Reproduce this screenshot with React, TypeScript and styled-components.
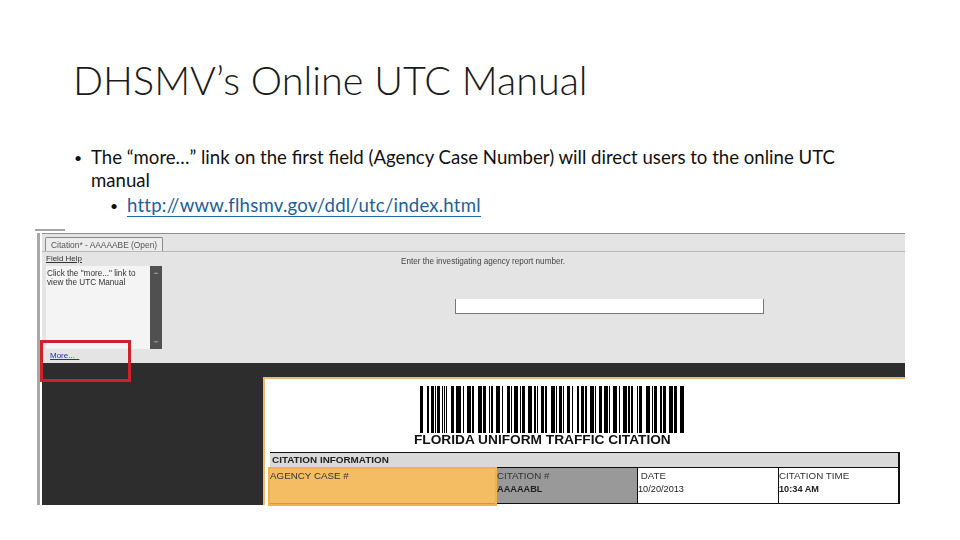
import { createGlobalStyle, styled } from "styled-components";

const GlobalStyle = createGlobalStyle`
  html, body {
    margin: 0;
    padding: 0;
    background: #fff;
  }
`;

// bar, gap, bar, gap ... in pixels, read off the reference
const barcode: number[] = [
  3, 4, 2, 2, 3, 1, 1, 1, 3, 2, 1, 1, 1, 1, 1, 4,
  3, 2, 5, 2, 1, 3, 4, 1, 2, 4,
  4, 1, 3, 3, 1, 1, 2, 3, 4, 2, 1, 4,
  3, 1, 1, 2, 4, 2, 1, 1, 3, 3,
  4, 2, 2, 1, 1, 3, 3, 1, 2, 4,
  4, 1, 1, 2, 3, 1, 1, 3, 3, 2, 1, 4,
  2, 2, 3, 1, 2, 3, 4, 1, 1, 3,
  3, 2, 4, 1, 1, 3, 4, 2, 1, 3,
  4, 1, 2, 1, 2, 4, 1, 1, 3, 4,
  4, 2, 1, 1, 3, 3, 2, 1, 3, 3, 4, 1, 3, 3, 4,
];

const Barcode = () => {
  let x = 0;
  const bars = barcode.map((w, i) => {
    const rect = i % 2 === 0 ? <rect key={i} x={x} y={0} width={w} height={47} fill="#000" /> : null;
    x += w;
    return rect;
  });
  return (
    <BarcodeSvg viewBox={`0 0 ${x} 47`} preserveAspectRatio="none">
      {bars}
    </BarcodeSvg>
  );
};

const App = () => {
  return (
    <Slide>
      <GlobalStyle />
      <Title>DHSMV’s Online UTC Manual</Title>
      <Bullets>
        <Bullet>
          The “more…” link on the first field (Agency Case Number) will direct users to the online UTC manual
        </Bullet>
        <SubBullet>
          <LinkText>http://www.flhsmv.gov/ddl/utc/index.html</LinkText>
        </SubBullet>
      </Bullets>
      <Shot>
        <ShotTick />
        <LeftEdge />
        <ShotBody>
          <TopPanel>
            <TabStrip>
              <Tab>Citation* - AAAAABE (Open)</Tab>
            </TabStrip>
            <PanelMain>
              <Sidebar>
                <HelpTitle>Field Help</HelpTitle>
                <HelpRow>
                  <HelpBox>
                    Click the "more..." link to
                    <br />
                    view the UTC Manual
                  </HelpBox>
                  <ScrollBar>
                    <ArrowUp />
                    <ArrowDown />
                  </ScrollBar>
                </HelpRow>
                <MoreLink>More...&nbsp;&nbsp;</MoreLink>
              </Sidebar>
              <FieldArea>
                <Prompt>Enter the investigating agency report number.</Prompt>
                <InputBox />
              </FieldArea>
            </PanelMain>
          </TopPanel>
          <DarkPanel>
            <Paper>
              <Barcode />
              <FormTitle>FLORIDA UNIFORM TRAFFIC CITATION</FormTitle>
              <Table>
                <TableHead>CITATION INFORMATION</TableHead>
                <TableRow>
                  <Cell $w={227}>
                    <CellLabel>AGENCY CASE #</CellLabel>
                  </Cell>
                  <Cell $w={140} $bg="#999999">
                    <CellLabel>CITATION #</CellLabel>
                    <CellValue>AAAAABL</CellValue>
                  </Cell>
                  <Cell $w={141} $line>
                    <CellLabel>&nbsp;DATE</CellLabel>
                    <CellValue $normal>10/20/2013</CellValue>
                  </Cell>
                  <Cell $w={119} $line>
                    <CellLabel>CITATION TIME</CellLabel>
                    <CellValue>10:34 AM</CellValue>
                  </Cell>
                </TableRow>
                <ActiveField />
              </Table>
            </Paper>
          </DarkPanel>
        </ShotBody>
        <Callout />
      </Shot>
    </Slide>
  );
};

export default App;

const Slide = styled.div`
  position: relative;
  width: 960px;
  height: 540px;
  overflow: hidden;
  background: #fff;
  padding: 54px 0 0 74px;
  box-sizing: border-box;
  font-family: "Lato", "Liberation Sans", sans-serif;
`;

const Title = styled.h1`
  margin: 0 0 0 -1px;
  height: 92px;
  font-size: 39.6px;
  line-height: 52px;
  font-weight: 300;
  color: #1a1a1a;
`;

const Bullets = styled.ul`
  list-style: none;
  margin: 0;
  padding: 0;
  width: 790px;
  font-size: 18.6px;
  line-height: 23px;
  color: #111;
`;

const Bullet = styled.li`
  position: relative;
  padding-left: 17px;

  &::before {
    content: "•";
    position: absolute;
    left: 0;
    top: 0;
    font-size: 14px;
  }
`;

const SubBullet = styled(Bullet)`
  margin: 2px 0 0 36px;
  padding-left: 17px;
`;

const LinkText = styled.span`
  color: #1f5f96;
  border-bottom: 1.5px solid #1f6aa8;
  letter-spacing: 0.2px;
`;

const Shot = styled.div`
  position: relative;
  display: flex;
  width: 870px;
  height: 272px;
  margin: 16px 0 0 -39px;
  filter: blur(0.25px);
  font-family: "Liberation Sans", sans-serif;
`;

const ShotTick = styled.div`
  position: absolute;
  left: 0;
  top: -4px;
  width: 30px;
  height: 2px;
  background: #a5a5a5;
`;

const LeftEdge = styled.div`
  width: 3px;
  margin: 0 2px 0 2px;
  background: #a8a8a8;
`;

const ShotBody = styled.div`
  flex: 1;
  display: flex;
  flex-direction: column;
  border-top: 1px solid #8e9294;
`;

const TopPanel = styled.div`
  height: 129px;
  background: #e4e4e4;
  display: flex;
  flex-direction: column;
`;

const TabStrip = styled.div`
  height: 18px;
  padding: 3px 0 0 3px;
  box-sizing: border-box;
  border-bottom: 1px solid #b8b8b8;
`;

const Tab = styled.div`
  width: 118px;
  height: 14px;
  box-sizing: border-box;
  border: 1px solid #8a8a8a;
  border-bottom: none;
  border-radius: 2px 2px 0 0;
  background: #ececec;
  font-size: 8.4px;
  line-height: 14px;
  color: #555;
  padding-left: 5px;
  white-space: nowrap;
`;

const PanelMain = styled.div`
  flex: 1;
  display: flex;
`;

const Sidebar = styled.div`
  width: 359px;
  flex: none;
  padding-left: 4px;
  box-sizing: border-box;
`;

const HelpTitle = styled.div`
  font-size: 8px;
  line-height: 13px;
  height: 14px;
  color: #333;
  text-decoration: underline;
`;

const HelpRow = styled.div`
  display: flex;
  height: 83px;
`;

const HelpBox = styled.div`
  width: 104px;
  padding: 3px 1px;
  box-sizing: border-box;
  background: #f4f4f4;
  font-size: 8.2px;
  line-height: 9px;
  color: #333;
  white-space: nowrap;
`;

const ScrollBar = styled.div`
  width: 12px;
  background: #505050;
  display: flex;
  flex-direction: column;
  justify-content: space-between;
  align-items: center;
  padding: 6px 0;
  box-sizing: border-box;
`;

const ArrowUp = styled.div`
  width: 0;
  height: 0;
  border-left: 3px solid transparent;
  border-right: 3px solid transparent;
  border-bottom: 2px solid #8c8c8c;
`;

const ArrowDown = styled.div`
  width: 0;
  height: 0;
  border-left: 3px solid transparent;
  border-right: 3px solid transparent;
  border-top: 2px solid #8c8c8c;
`;

const MoreLink = styled.div`
  width: fit-content;
  margin: 2px 0 0 4px;
  font-size: 8px;
  line-height: 10px;
  color: #1f2fb0;
  text-decoration: underline;
`;

const FieldArea = styled.div`
  flex: 1;
  padding: 5px 0 0 0;
`;

const Prompt = styled.div`
  font-size: 8.15px;
  line-height: 10px;
  color: #444;
  white-space: nowrap;
`;

const InputBox = styled.div`
  width: 309px;
  height: 15px;
  margin: 32px 0 0 54px;
  box-sizing: border-box;
  background: #fff;
  border: 1px solid #777;
  border-top: none;
`;

const DarkPanel = styled.div`
  flex: 1;
  min-height: 0;
  background: #2d2d2d;
  padding: 14px 0 0 221px;
`;

const Paper = styled.div`
  height: 128px;
  box-sizing: border-box;
  background: #fff;
  border-top: 2px solid #e8bb6e;
  border-left: 2px solid #e8bb6e;
  padding: 7px 0 0 5px;
  display: flex;
  flex-direction: column;
`;

const BarcodeSvg = styled.svg`
  display: block;
  width: 264px;
  height: 47px;
  margin-left: 150px;
  flex: none;
`;

const FormTitle = styled.div`
  box-sizing: border-box;
  padding-left: 144px;
  font-size: 13.7px;
  line-height: 14px;
  font-weight: 700;
  color: #111;
  white-space: nowrap;
`;

const Table = styled.div`
  position: relative;
  width: 630px;
  height: 52px;
  margin-top: 5px;
  box-sizing: border-box;
  border: 1px solid #111;
  border-left: none;
  border-right: 2px solid #111;
`;

const TableHead = styled.div`
  height: 14px;
  background: #d9d9d9;
  font-size: 9.9px;
  line-height: 14px;
  font-weight: 700;
  color: #222;
  padding-left: 2px;
  border-bottom: 1px solid #111;
`;

const TableRow = styled.div`
  display: flex;
  height: 35px;
`;

const Cell = styled.div<{ $w: number; $bg?: string; $line?: boolean }>`
  width: ${(props) => props.$w}px;
  flex: none;
  box-sizing: border-box;
  background: ${(props) => props.$bg || "#fff"};
  border-left: ${(props) => (props.$line ? "1px solid #111" : "none")};
  padding: 2px 0 0 0;
`;

const CellLabel = styled.div`
  position: relative;
  z-index: 2;
  font-size: 9.8px;
  line-height: 12px;
  color: #333;
  white-space: nowrap;
`;

const CellValue = styled.div<{ $normal?: boolean }>`
  font-size: 9.2px;
  line-height: 12px;
  margin-top: 1px;
  font-weight: ${(props) => (props.$normal ? 400 : 700)};
  color: #222;
  white-space: nowrap;
`;

const ActiveField = styled.div`
  position: absolute;
  left: -2px;
  top: 14px;
  width: 229px;
  height: 39px;
  box-sizing: border-box;
  background: rgba(242, 178, 72, 0.85);
  border: 2px solid #f0b24f;
`;

const Callout = styled.div`
  position: absolute;
  left: 5px;
  top: 107px;
  width: 91px;
  height: 42px;
  box-sizing: border-box;
  border: 3px solid #d0202e;
`;
